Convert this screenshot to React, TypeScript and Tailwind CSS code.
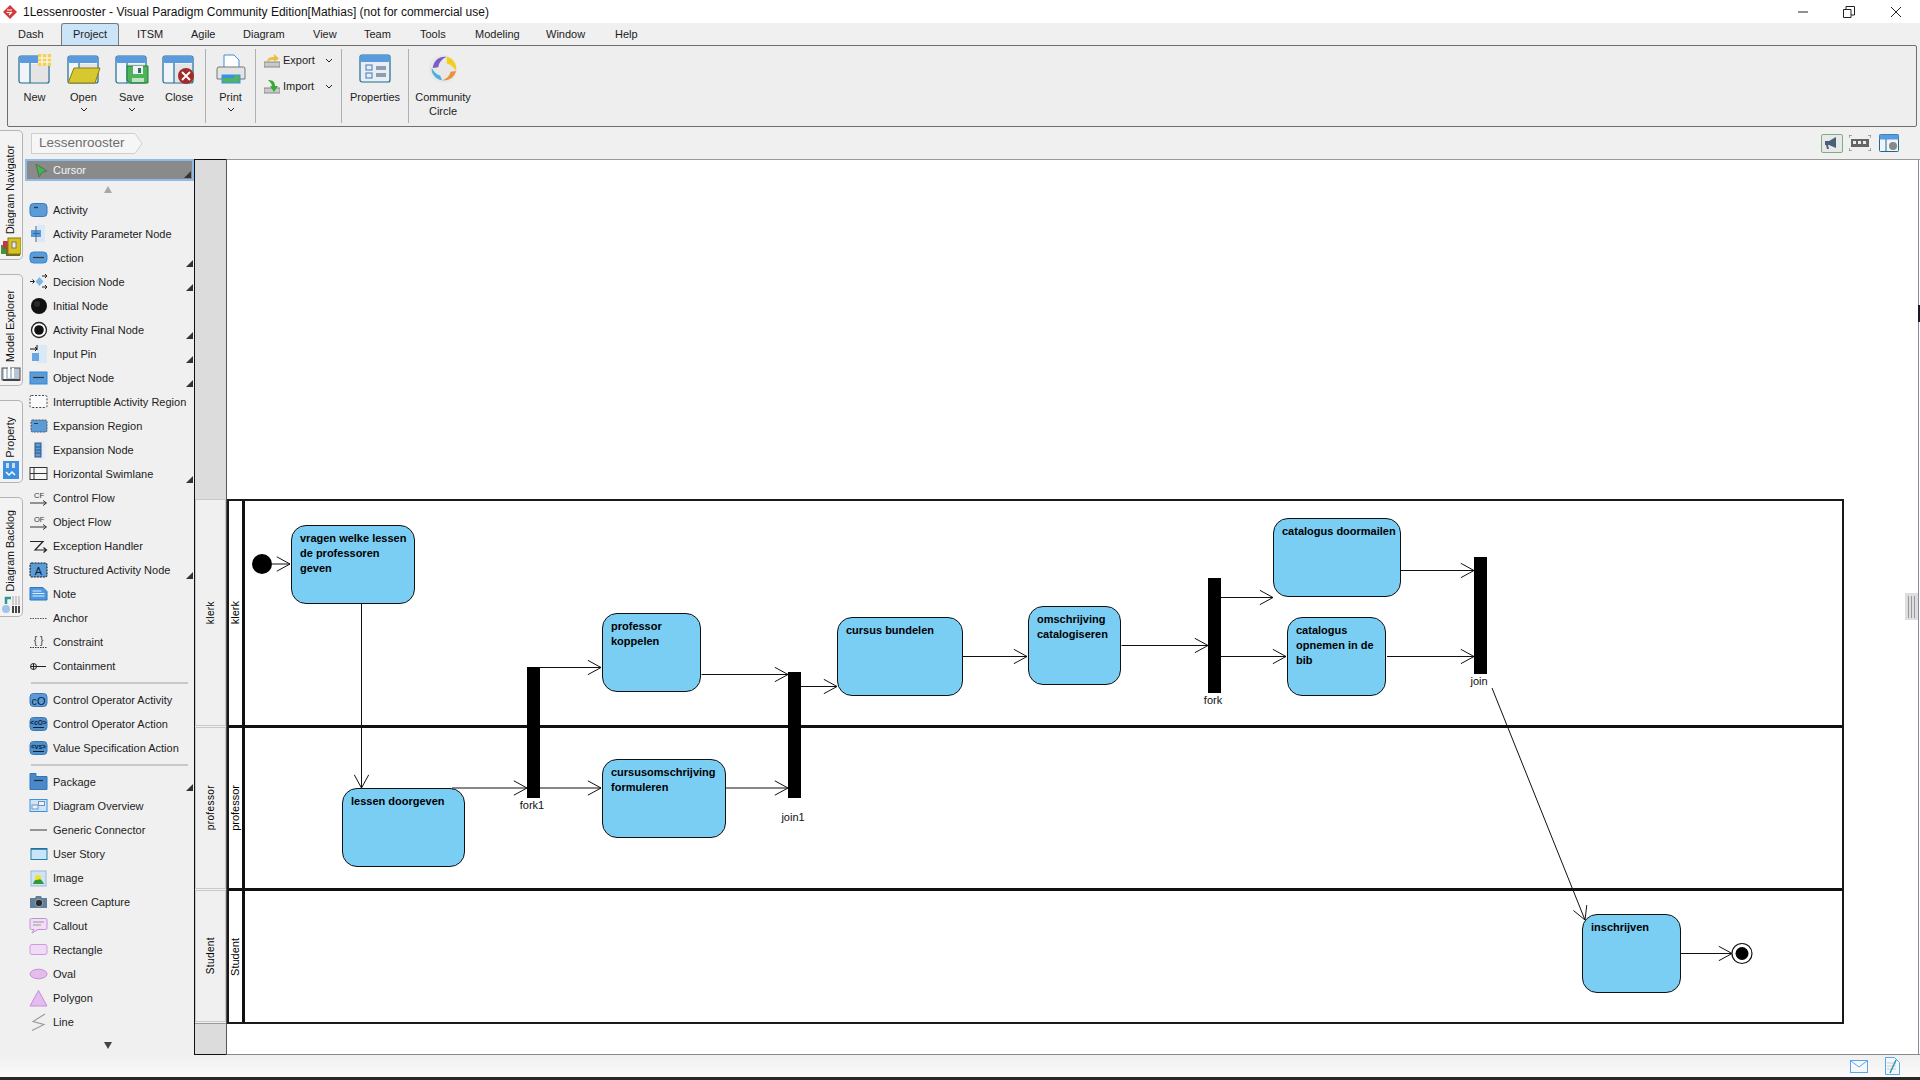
import React from "react";

const X0 = 227;
const Y0 = 159;

type IconProps = { name: string };

function PaletteIcon({ name }: IconProps) {
  const common = { width: 20, height: 20, viewBox: "0 0 20 20" };
  switch (name) {
    case "Activity":
      return (
        <svg {...common}>
          <rect x="1" y="3.500" width="17" height="13" rx="3.500" fill="#5a9bd8" stroke="#3a78b8" />
          <path d="M5 7.500h4" stroke="#1d3d5c" strokeWidth="1.400" />
        </svg>
      );
    case "Activity Parameter Node":
      return (
        <svg {...common}>
          <rect x="8" y="1" width="8" height="17" fill="#dbe9f7" />
          <rect x="2" y="6" width="10" height="7" fill="#5a9bd8" />
          <path d="M7 2v16M4 9.500h7" stroke="#3a6a98" />
        </svg>
      );
    case "Action":
      return (
        <svg {...common}>
          <rect x="1" y="4" width="17" height="11" rx="3.500" fill="#5a9bd8" stroke="#2f86dd" />
          <path d="M4 9.500h11" stroke="#333" strokeWidth="1.200" />
        </svg>
      );
    case "Decision Node":
      return (
        <svg {...common}>
          <path d="M10.500 5l4 4.500-4 4.500-4-4.500z" fill="#7db7ea" />
          <path d="M1 9.500h4M3.500 7.500l2 2-2 2M13 4h5M16 2l2 2-2 2M13 15h5M16 13l2 2-2 2" stroke="#222" fill="none" />
        </svg>
      );
    case "Initial Node":
      return (
        <svg {...common}>
          <circle cx="10" cy="10" r="8" fill="#111" />
          <circle cx="8" cy="8" r="3" fill="#444" opacity=".5" />
        </svg>
      );
    case "Activity Final Node":
      return (
        <svg {...common}>
          <circle cx="10" cy="10" r="7.500" fill="#fff" stroke="#222" strokeWidth="1.300" />
          <circle cx="10" cy="10" r="4.800" fill="#111" />
        </svg>
      );
    case "Input Pin":
      return (
        <svg {...common}>
          <rect x="8" y="1" width="10" height="18" fill="#dbe9f7" />
          <rect x="3" y="9" width="7" height="8" fill="#6aa7e2" />
          <path d="M1 5h7M6 3l2 2-2 2" stroke="#111" fill="none" />
          <path d="M8 1v5" stroke="#111" />
        </svg>
      );
    case "Object Node":
      return (
        <svg {...common}>
          <rect x="1" y="4" width="17" height="12" fill="#5a9bd8" stroke="#2f86dd" />
          <path d="M4 9.500h11" stroke="#333" strokeWidth="1.200" />
        </svg>
      );
    case "Interruptible Activity Region":
      return (
        <svg {...common}>
          <rect x="1" y="3.500" width="17" height="12" rx="1.500" fill="#fafafa" stroke="#444" strokeDasharray="2 1.500" />
        </svg>
      );
    case "Expansion Region":
      return (
        <svg {...common}>
          <rect x="2" y="4" width="16" height="12" rx="1.500" fill="#5a9bd8" stroke="#555" strokeDasharray="2 1" />
          <path d="M5 7.500h4" stroke="#1d3d5c" />
        </svg>
      );
    case "Expansion Node":
      return (
        <svg {...common}>
          <rect x="10" y="1" width="6" height="18" fill="#e3eefa" />
          <rect x="6" y="3" width="6" height="14" fill="#5a9bd8" stroke="#33577a" />
          <path d="M6 7h6M6 10h6M6 13h6" stroke="#33577a" />
        </svg>
      );
    case "Horizontal Swimlane":
      return (
        <svg {...common}>
          <rect x="1" y="3.500" width="17" height="12" fill="#f6f6f6" stroke="#333" />
          <path d="M5 3.500v12M1 9.500h17" stroke="#333" />
        </svg>
      );
    case "Control Flow":
    case "Object Flow":
      return (
        <svg {...common}>
          <path d="M1 15h16M14 12.500l3.500 2.500-3.500 2.500" stroke="#333" fill="none" />
          <text x="5" y="9.500" fontSize="7.500" fontFamily="Liberation Sans" fill="#333">
            {name === "Control Flow" ? "CF" : "OF"}
          </text>
        </svg>
      );
    case "Exception Handler":
      return (
        <svg {...common}>
          <path d="M1 5.500h13L6 14h11.500M14.500 11.500l3 2.500-3 2.500" stroke="#222" strokeWidth="1.200" fill="none" />
        </svg>
      );
    case "Structured Activity Node":
      return (
        <svg {...common}>
          <rect x="1" y="3" width="17" height="14" rx="1.500" fill="#5a9bd8" stroke="#111" strokeDasharray="2 1" />
          <text x="9.500" y="14.500" fontSize="11" fontFamily="Liberation Sans" fill="#123" textAnchor="middle">A</text>
        </svg>
      );
    case "Note":
      return (
        <svg {...common}>
          <path d="M1 3.500h13l4 4v8.500H1z" fill="#4f97de" stroke="#2f76c0" />
          <path d="M3.500 7h9M3.500 9.500h12M3.500 12h12" stroke="#dceeff" />
        </svg>
      );
    case "Anchor":
      return (
        <svg {...common}>
          <path d="M1 10.500h17" stroke="#555" strokeDasharray="1.500 1" />
        </svg>
      );
    case "Constraint":
      return (
        <svg {...common}>
          <path d="M1 15.500h17" stroke="#333" strokeDasharray="1.500 1" />
          <text x="9.500" y="11.500" fontSize="10" fontFamily="Liberation Sans" fill="#333" textAnchor="middle">{"{ }"}</text>
        </svg>
      );
    case "Containment":
      return (
        <svg {...common}>
          <circle cx="4.500" cy="10.500" r="3" fill="none" stroke="#222" />
          <path d="M1.500 10.500H17M4.500 7.500v6" stroke="#222" />
        </svg>
      );
    case "Control Operator Activity":
      return (
        <svg {...common}>
          <rect x="1" y="3.500" width="17" height="13" rx="3.500" fill="#5a9bd8" stroke="#3a78b8" />
          <text x="9.500" y="14.500" fontSize="11" fontFamily="Liberation Sans" fill="#123" textAnchor="middle">cO</text>
        </svg>
      );
    case "Control Operator Action":
    case "Value Specification Action":
      return (
        <svg {...common}>
          <rect x="1" y="3.500" width="17" height="13" rx="3.500" fill="#4f8fcb" stroke="#3a78b8" />
          <text x="9.500" y="11" fontSize="6.500" fontFamily="Liberation Sans" fontWeight="700" fill="#0c2236" textAnchor="middle">
            {name === "Control Operator Action" ? "<cO>" : "<vs>"}
          </text>
          <path d="M4 13.500h11" stroke="#0c2236" />
        </svg>
      );
    case "Package":
      return (
        <svg {...common}>
          <path d="M1 1.500h6v3h11v13H1z" fill="#4b88c7" stroke="#2f76c0" />
          <path d="M5 8.500h9" stroke="#1d2d3c" strokeWidth="1.200" />
        </svg>
      );
    case "Diagram Overview":
      return (
        <svg {...common}>
          <rect x="1" y="3.500" width="17" height="12" fill="#cfe4f8" stroke="#3d8fe0" />
          <rect x="3" y="9" width="6" height="4" fill="#eaf3fc" stroke="#6e96bb" />
          <rect x="9.500" y="5.500" width="6" height="4" fill="#eaf3fc" stroke="#6e96bb" />
        </svg>
      );
    case "Generic Connector":
      return (
        <svg {...common}>
          <path d="M1 10h17" stroke="#777" strokeWidth="1.500" />
        </svg>
      );
    case "User Story":
      return (
        <svg {...common}>
          <rect x="2" y="4.500" width="16" height="11" fill="#c8e6f8" stroke="#2a7fa8" />
          <path d="M2 5h16" stroke="#1d6f9c" strokeWidth="1.500" />
        </svg>
      );
    case "Image":
      return (
        <svg {...common}>
          <rect x="2" y="3" width="15" height="15" fill="#cfe3f4" stroke="#9bb9d4" />
          <circle cx="9" cy="10" r="3" fill="#f5e21a" />
          <path d="M4 16c1-4 3-5 5-4 2-2 4 0 6 4z" fill="#2e9a3a" />
        </svg>
      );
    case "Screen Capture":
      return (
        <svg {...common}>
          <path d="M1 6h5l1-2h5l1 2h5v10H1z" fill="#5f7f9c" />
          <circle cx="10" cy="11" r="3.800" fill="#2b2b2b" stroke="#9aa" />
        </svg>
      );
    case "Callout":
      return (
        <svg {...common}>
          <path d="M2.500 2.500h14a1.500 1.500 0 0 1 1.500 1.500v8a1.500 1.500 0 0 1-1.500 1.500H9L3 17l2-3.500H2.500A1.500 1.500 0 0 1 1 12V4a1.500 1.500 0 0 1 1.500-1.500z" fill="#f2dff5" stroke="#c58ed8" />
          <path d="M4 6h11M4 9h8" stroke="#999" />
        </svg>
      );
    case "Rectangle":
      return (
        <svg {...common}>
          <rect x="1" y="4.500" width="17" height="10" rx="2" fill="#f0daf5" stroke="#cf9be0" />
        </svg>
      );
    case "Oval":
      return (
        <svg {...common}>
          <ellipse cx="9.500" cy="10" rx="8.500" ry="4.800" fill="#e4bdec" stroke="#c58ed8" />
        </svg>
      );
    case "Polygon":
      return (
        <svg {...common}>
          <path d="M9.500 2.500L18 18H1z" fill="#e3bdf0" stroke="#c58ed8" />
        </svg>
      );
    case "Line":
      return (
        <svg {...common}>
          <path d="M16 2L4 9.500l11 3L3 18.500" stroke="#999" strokeWidth="1.100" fill="none" />
        </svg>
      );
    default:
      return null;
  }
}

const group1: [string, boolean][] = [
  ["Activity", false],
  ["Activity Parameter Node", false],
  ["Action", true],
  ["Decision Node", true],
  ["Initial Node", false],
  ["Activity Final Node", true],
  ["Input Pin", true],
  ["Object Node", true],
  ["Interruptible Activity Region", false],
  ["Expansion Region", false],
  ["Expansion Node", false],
  ["Horizontal Swimlane", true],
  ["Control Flow", false],
  ["Object Flow", false],
  ["Exception Handler", false],
  ["Structured Activity Node", true],
  ["Note", false],
  ["Anchor", false],
  ["Constraint", false],
  ["Containment", false],
];
const group2: [string, boolean][] = [
  ["Control Operator Activity", false],
  ["Control Operator Action", false],
  ["Value Specification Action", false],
];
const group3: [string, boolean][] = [
  ["Package", true],
  ["Diagram Overview", false],
  ["Generic Connector", false],
  ["User Story", false],
  ["Image", false],
  ["Screen Capture", false],
  ["Callout", false],
  ["Rectangle", false],
  ["Oval", false],
  ["Polygon", false],
  ["Line", false],
];

function Corner() {
  return (
    <span className="absolute right-[1px] bottom-[1px] w-0 h-0 border-l-[7px] border-l-transparent border-b-[7px] border-b-[#333]" />
  );
}

function PaletteRow({ name, more }: { name: string; more: boolean }) {
  return (
    <div className="relative h-[24px] flex items-center pl-[4px] text-[11px] text-[#1c1c1c] whitespace-nowrap">
      <span className="w-[24px] h-[20px] shrink-0 flex items-center">
        <PaletteIcon name={name} />
      </span>
      <span>{name}</span>
      {more && <span className="absolute right-[1px] top-[14px] w-0 h-0 border-l-[7px] border-l-transparent border-b-[7px] border-b-[#333]" />}
    </div>
  );
}

function Divider() {
  return <div className="h-[2px] mx-[6px] bg-[#c8c8c8]" />;
}

function Palette() {
  return (
    <div className="w-[169px] shrink-0 flex flex-col bg-[#f0f0f0]">
      <div className="relative h-[22px] border-2 border-[#8fbce6] bg-[#8a8a8a] flex items-center pl-[7px] text-[11px] text-[#f4f4f4]">
        <svg width="14" height="15" viewBox="0 0 14 15" className="mr-[5px]">
          <path d="M2 1l11 7-5 1.500L5 14z" fill="#3fb54a" stroke="#55705a" />
        </svg>
        Cursor
        <Corner />
      </div>
      <div className="h-[17px] flex items-center justify-center">
        <span className="w-0 h-0 ml-[-4px] border-l-[4px] border-r-[4px] border-b-[7px] border-l-transparent border-r-transparent border-b-[#a8a8a8]" />
      </div>
      {group1.map(([n, m]) => (
        <PaletteRow key={n} name={n} more={m} />
      ))}
      <div className="h-[10px] flex flex-col justify-center"><Divider /></div>
      {group2.map(([n, m]) => (
        <PaletteRow key={n} name={n} more={m} />
      ))}
      <div className="h-[10px] flex flex-col justify-center"><Divider /></div>
      {group3.map(([n, m]) => (
        <PaletteRow key={n} name={n} more={m} />
      ))}
      <div className="flex justify-center pt-[8px]">
        <span className="w-0 h-0 ml-[-4px] border-l-[4px] border-r-[4px] border-t-[7px] border-l-transparent border-r-transparent border-t-[#444]" />
      </div>
    </div>
  );
}

function RailIcon({ kind }: { kind: string }) {
  if (kind === "nav")
    return (
      <svg width="20" height="20" viewBox="0 0 20 20">
        <rect x="0" y="8" width="5" height="9" fill="#3a9a3a" />
        <rect x="2" y="4" width="5" height="8" fill="#c8324a" />
        <rect x="5" y="9" width="14" height="10" fill="#6a6a30" />
        <rect x="7" y="1" width="13" height="16" fill="#d9c21e" stroke="#8a7a12" />
        <rect x="11" y="5" width="4" height="6" fill="#eee" stroke="#777" />
      </svg>
    );
  if (kind === "model")
    return (
      <svg width="20" height="18" viewBox="0 0 20 18">
        <rect x="1" y="3" width="18" height="12" fill="#b8c6d4" stroke="#555" />
        <path d="M4 4v10M8 2v11M12 3v10" stroke="#fff" strokeWidth="2" />
        <path d="M2 15h17" stroke="#444" strokeWidth="2" />
      </svg>
    );
  if (kind === "prop")
    return (
      <svg width="18" height="20" viewBox="0 0 18 20">
        <rect x="1" y="1" width="16" height="18" fill="#3d8fe0" />
        <rect x="4" y="3" width="3" height="5" fill="#cde" />
        <rect x="10" y="3" width="3" height="5" fill="#cde" />
        <path d="M4 12l3 3 3-3 3 3" stroke="#fff" strokeWidth="1.500" fill="none" />
      </svg>
    );
  return (
    <svg width="20" height="20" viewBox="0 0 20 20">
      <path d="M5 10V4h5" stroke="#2a9a90" strokeWidth="2.500" fill="none" />
      <circle cx="5" cy="15" r="4" fill="#9fc4e8" />
      <path d="M11 12h2v7h-2zM14 12h2v7h-2zM17 12h2v7h-2z" fill="#444" />
      <path d="M11 2h2v9h-2zM14 2h2v9h-2zM17 2h2v9h-2z" fill="#ccc" />
    </svg>
  );
}

function RailTab({ label, h, kind, mt }: { label: string; h: string; kind: string; mt: string }) {
  return (
    <div className={`${h} ${mt} w-[23px] shrink-0 flex flex-col items-center justify-end pb-[2px] bg-[#f3f3f3] border border-l-0 border-[#b4b4b4] rounded-r-[5px]`}>
      <span className="[writing-mode:vertical-rl] rotate-180 text-[10.700px] leading-[14px] text-[#111] whitespace-nowrap mb-[3px] mr-[3px]">
        {label}
      </span>
      <RailIcon kind={kind} />
    </div>
  );
}

function LaneHeader({ label, h }: { label: string; h: string }) {
  return (
    <div className={`${h} bg-[#f0f0f0] border border-[#c8c8c8] mb-[1px] flex items-center justify-center`}>
      <span className="[writing-mode:vertical-rl] rotate-180 text-[10px] tracking-[0.400px] text-black">{label}</span>
    </div>
  );
}

type NodeT = { x: number; y: number; w: number; h: number; lines: string[] };
const nodes: NodeT[] = [
  { x: 291, y: 525, w: 124, h: 79, lines: ["vragen welke lessen", "de professoren", "geven"] },
  { x: 342, y: 788, w: 123, h: 79, lines: ["lessen doorgeven"] },
  { x: 602, y: 613, w: 99, h: 79, lines: ["professor", "koppelen"] },
  { x: 602, y: 759, w: 124, h: 79, lines: ["cursusomschrijving", "formuleren"] },
  { x: 837, y: 617, w: 126, h: 79, lines: ["cursus bundelen"] },
  { x: 1028, y: 606, w: 93, h: 79, lines: ["omschrijving", "catalogiseren"] },
  { x: 1273, y: 518, w: 128, h: 79, lines: ["catalogus doormailen"] },
  { x: 1287, y: 617, w: 99, h: 79, lines: ["catalogus", "opnemen in de", "bib"] },
  { x: 1582, y: 914, w: 99, h: 79, lines: ["inschrijven"] },
];

const bars = [
  { x: 527, y: 667, w: 13, h: 131, label: "fork1", lx: 532, ly: 805 },
  { x: 788, y: 672, w: 13, h: 126, label: "join1", lx: 793, ly: 817 },
  { x: 1208, y: 578, w: 13, h: 115, label: "fork", lx: 1213, ly: 700 },
  { x: 1474, y: 557, w: 13, h: 117, label: "join", lx: 1479, ly: 681 },
];

const edges: [number, number, number, number][] = [
  [272, 564, 290, 564],
  [361.500, 604, 361.500, 788],
  [452, 788, 527, 788],
  [540, 667.500, 601, 667.500],
  [701.500, 674.500, 788, 674.500],
  [540, 788, 601, 788],
  [726, 788, 788, 788],
  [801, 686.500, 837, 686.500],
  [963, 656.500, 1027, 656.500],
  [1121.500, 645.500, 1208, 645.500],
  [1221, 597.500, 1273, 597.500],
  [1221, 656.500, 1286, 656.500],
  [1401, 570.500, 1474, 570.500],
  [1387, 656.500, 1474, 656.500],
  [1492, 688, 1585, 920],
  [1681, 953.500, 1732, 953.500],
];

function arrowHead(x1: number, y1: number, x2: number, y2: number) {
  const a = Math.atan2(y2 - y1, x2 - x1);
  const len = 15;
  const sp = 0.5;
  const p = (t: number) => `${x2 - len * Math.cos(a + t)},${y2 - len * Math.sin(a + t)}`;
  return `${p(sp)} ${x2},${y2} ${p(-sp)}`;
}

function Diagram() {
  return (
    <>
      <div className="absolute left-0 top-[340px] w-[1617px] h-[525px] border-2 border-[#1a1a1a] flex flex-col">
        {[
          { label: "klerk", cls: "h-[224px]" },
          { label: "professor", cls: "h-[163px] border-t-[3px] border-[#111]" },
          { label: "Student", cls: "flex-1 border-t-[3px] border-[#111]" },
        ].map((l) => (
          <div key={l.label} className={`${l.cls} flex`}>
            <div className="w-[13px] h-full border-r-[3px] border-[#111] flex items-center justify-center shrink-0 box-content">
              <span className="[writing-mode:vertical-rl] rotate-180 text-[11px] text-black">{l.label}</span>
            </div>
          </div>
        ))}
      </div>
      <svg className="absolute left-0 top-0 pointer-events-none" width="1693" height="895" viewBox={`${X0} ${Y0} 1693 895`}>
        {edges.map(([x1, y1, x2, y2], i) => (
          <g key={i} stroke="#111" fill="none" strokeWidth="1">
            <line x1={x1} y1={y1} x2={x2} y2={y2} />
            <polyline points={arrowHead(x1, y1, x2, y2)} />
          </g>
        ))}
        <ellipse cx="262" cy="564" rx="10" ry="10" fill="#000" />
        <circle cx="1742" cy="953.500" r="10" fill="#fff" stroke="#111" strokeWidth="1.200" />
        <circle cx="1742" cy="953.500" r="6.500" fill="#000" />
      </svg>
      {nodes.map((n) => (
        <div
          key={n.lines[0]}
          className="absolute rounded-[15px] border border-[#111] bg-[#7acef4] pl-[8px] pt-[5px] text-[11px] leading-[15px] font-bold text-black whitespace-nowrap"
          style={{ left: n.x - X0, top: n.y - Y0, width: n.w, height: n.h }}
        >
          {n.lines.map((t) => (
            <div key={t}>{t}</div>
          ))}
        </div>
      ))}
      {bars.map((b) => (
        <React.Fragment key={b.label}>
          <div className="absolute bg-black" style={{ left: b.x - X0, top: b.y - Y0, width: b.w, height: b.h }} />
          <div
            className="absolute -translate-x-1/2 -translate-y-1/2 text-[11px] leading-[12px] text-[#111]"
            style={{ left: b.lx - X0, top: b.ly - Y0 }}
          >
            {b.label}
          </div>
        </React.Fragment>
      ))}
    </>
  );
}

function RibbonIcon({ kind }: { kind: string }) {
  const frame = (
    <>
      <rect x="1" y="2" width="30" height="27" rx="2" fill="#f0f4f8" stroke="#1e6a8e" strokeWidth="1.200" />
      <rect x="1" y="2" width="30" height="7" rx="2" fill="#5a9be0" />
      <path d="M12 9v20" stroke="#1e6a8e" strokeWidth="1.200" />
      <rect x="13" y="10" width="17" height="18" fill="#e4e4e4" />
    </>
  );
  if (kind === "new")
    return (
      <svg width="34" height="32" viewBox="0 0 34 32">
        {frame}
        <rect x="20" y="0" width="13" height="12" fill="#f0d060" />
        <path d="M24 0v12M29 0v12M20 4h13M20 8h13" stroke="#fff" />
      </svg>
    );
  if (kind === "open")
    return (
      <svg width="34" height="32" viewBox="0 0 34 32">
        {frame}
        <path d="M7 14h26l-5 15H1z" fill="#d8c830" stroke="#8a7a12" />
      </svg>
    );
  if (kind === "save")
    return (
      <svg width="34" height="32" viewBox="0 0 34 32">
        {frame}
        <path d="M12 12h21v17H15l-3-3z" fill="#4fb35a" stroke="#1f7f3a" />
        <rect x="18" y="12" width="10" height="8" fill="#eef" />
        <rect x="23" y="14" width="3" height="5" fill="#2a7a3a" />
        <rect x="17" y="24" width="12" height="4" fill="#bfe2c5" />
      </svg>
    );
  if (kind === "close")
    return (
      <svg width="34" height="32" viewBox="0 0 34 32">
        {frame}
        <circle cx="24" cy="22" r="8" fill="#a02c2c" />
        <path d="M20 18l8 8M28 18l-8 8" stroke="#fff" strokeWidth="1.800" />
      </svg>
    );
  if (kind === "print")
    return (
      <svg width="30" height="32" viewBox="0 0 30 32">
        <path d="M8 1h10l5 5v9H8z" fill="#fff" stroke="#3d8fe0" />
        <path d="M2 13h26a2 2 0 0 1 1 2v10H1V15z" fill="#e4e4e4" stroke="#777" />
        <rect x="6" y="21" width="18" height="8" fill="#4fb36a" stroke="#3d8fe0" />
        <rect x="6" y="21" width="12" height="3" fill="#3d8fe0" />
      </svg>
    );
  if (kind === "props")
    return (
      <svg width="32" height="30" viewBox="0 0 32 30">
        <rect x="1" y="1" width="30" height="27" rx="2" fill="#e8eef4" stroke="#1e6a8e" strokeWidth="1.200" />
        <rect x="1" y="1" width="30" height="7" rx="2" fill="#5a9be0" />
        <rect x="7" y="11" width="6" height="5" fill="none" stroke="#3d7ab8" />
        <rect x="7" y="19" width="6" height="5" fill="none" stroke="#3d7ab8" />
        <rect x="17" y="12" width="10" height="4" fill="#8e9eae" />
        <rect x="17" y="19" width="10" height="4" fill="#8e9eae" />
      </svg>
    );
  return (
    <svg width="30" height="30" viewBox="0 0 32 32">
      <circle cx="16" cy="16" r="15" fill="#e8e8e8" />
      <path d="M5 15C6 7 12 2 20 3c-4 2-8 5-9 11z" fill="#7c5cc4" />
      <path d="M20 3c7 2 11 8 10 15-2-3-5-7-10-8z" fill="#f2cf1e" />
      <path d="M30 18c-2 7-8 11-15 10 4-1 8-4 9-9z" fill="#e8923c" />
      <path d="M15 28C8 27 3 21 4 15c2 4 5 7 9 8z" fill="#4cb0e0" />
    </svg>
  );
}

function RibbonBtn({ label, kind, w, chevron }: { label: React.ReactNode; kind: string; w: string; chevron?: boolean }) {
  return (
    <div className={`${w} flex flex-col items-center text-[11px] leading-[14px] text-[#1c1c1c]`}>
      <div className="h-[36px] pt-[8px] flex items-start justify-center">
        <RibbonIcon kind={kind} />
      </div>
      <div className="mt-[8px] text-center">{label}</div>
      {chevron && (
        <svg width="8" height="5" viewBox="0 0 8 5" className="mt-[3px]">
          <path d="M1 1l3 3 3-3" stroke="#222" fill="none" />
        </svg>
      )}
    </div>
  );
}

const Sep = () => <div className="w-[1px] h-[74px] my-[3px] bg-[#b0b0b0]" />;

export default function App() {
  return (
    <div className="relative w-[1920px] h-[1080px] overflow-hidden flex flex-col bg-[#f0f0f0] [font-family:'Liberation_Sans',sans-serif]">
      {/* Title bar */}
      <div className="h-[23px] shrink-0 bg-white flex items-center relative">
        <svg width="16" height="16" viewBox="0 0 16 16" className="ml-[2px] mr-[5px]">
          <path d="M8 1l7 7-7 7-7-7z" fill="#d23a3a" />
          <path d="M5 6h5M4.500 8.500h5M7 11l3-3" stroke="#fff" strokeWidth="1.200" fill="none" />
        </svg>
        <span className="text-[12px] text-[#111]">1Lessenrooster - Visual Paradigm Community Edition[Mathias] (not for commercial use)</span>
        <div className="ml-auto flex items-center">
          <svg width="12" height="12" viewBox="0 0 12 12" className="mr-[34px]"><path d="M1 6h10" stroke="#222" /></svg>
          <svg width="12" height="12" viewBox="0 0 12 12" className="mr-[35px]">
            <path d="M.5 3.500h7.500v8H.5zM3 3.500V.500h8.500V9H8" stroke="#222" fill="none" />
          </svg>
          <svg width="12" height="12" viewBox="0 0 12 12" className="mr-[18px]"><path d="M1 1l10 10M11 1L1 11" stroke="#222" /></svg>
        </div>
      </div>
      {/* Tabs */}
      <div className="h-[22px] shrink-0 flex items-end text-[11px] text-[#1c1c1c]">
        <div className="ml-[18px] w-[43px] h-[21px] flex items-center">Dash</div>
        <div className="w-[58px] h-[22px] flex items-center justify-center bg-[#cce4f7] border border-b-0 border-[#7a7a7a] rounded-t-[3px]">Project</div>
        <div className="ml-[18px] w-[54px] h-[21px] flex items-center">ITSM</div>
        <div className="w-[52px] h-[21px] flex items-center">Agile</div>
        <div className="w-[70px] h-[21px] flex items-center">Diagram</div>
        <div className="w-[51px] h-[21px] flex items-center">View</div>
        <div className="w-[56px] h-[21px] flex items-center">Team</div>
        <div className="w-[55px] h-[21px] flex items-center">Tools</div>
        <div className="w-[71px] h-[21px] flex items-center">Modeling</div>
        <div className="w-[69px] h-[21px] flex items-center">Window</div>
        <div className="h-[21px] flex items-center">Help</div>
      </div>
      {/* Ribbon */}
      <div className="ml-[7px] mr-[3px] h-[82px] shrink-0 border border-[#6e6e6e] rounded-[2px] bg-[#eeeeee] flex pl-[4px]">
        <RibbonBtn label="New" kind="new" w="w-[45px]" />
        <div className="w-[2px]" />
        <RibbonBtn label="Open" kind="open" w="w-[49px]" chevron />
        <RibbonBtn label="Save" kind="save" w="w-[47px]" chevron />
        <RibbonBtn label="Close" kind="close" w="w-[48px]" />
        <div className="w-[2px]" />
        <Sep />
        <RibbonBtn label="Print" kind="print" w="w-[49px]" chevron />
        <Sep />
        <div className="w-[85px] text-[11px] text-[#1c1c1c] pl-[8px] pt-[1px]">
          <div className="h-[26px] flex items-center">
            <svg width="16" height="16" viewBox="0 0 16 16"><rect x="0" y="10" width="16" height="5" fill="#c8c8c8" stroke="#888" /><path d="M3 10c0-4 3-5 7-5V2l5 4.500L10 10V8c-3 0-5 0-7 2z" fill="#e8c040" /></svg>
            <span className="ml-[3px] w-[42px]">Export</span>
            <svg width="8" height="5" viewBox="0 0 8 5"><path d="M1 1l3 3 3-3" stroke="#222" fill="none" /></svg>
          </div>
          <div className="h-[26px] flex items-center">
            <svg width="16" height="16" viewBox="0 0 16 16"><rect x="0" y="10" width="16" height="5" fill="#c8c8c8" stroke="#888" /><path d="M4 2c5 0 7 2 7 6h3l-4 6-4-6h2c0-2-2-4-4-6z" fill="#3aa83a" /></svg>
            <span className="ml-[3px] w-[42px]">Import</span>
            <svg width="8" height="5" viewBox="0 0 8 5"><path d="M1 1l3 3 3-3" stroke="#222" fill="none" /></svg>
          </div>
        </div>
        <Sep />
        <RibbonBtn label="Properties" kind="props" w="w-[66px]" />
        <Sep />
        <RibbonBtn label={<>Community<br />Circle</>} kind="circle" w="w-[68px]" />
      </div>
      {/* Main */}
      <div className="flex-1 min-h-0 flex">
        <div className="w-[25px] shrink-0 flex flex-col pt-[3px]">
          <RailTab label="Diagram Navigator" h="h-[130px]" kind="nav" mt="" />
          <RailTab label="Model Explorer" h="h-[112px]" kind="model" mt="mt-[14px]" />
          <RailTab label="Property" h="h-[83px]" kind="prop" mt="mt-[14px]" />
          <RailTab label="Diagram Backlog" h="h-[120px]" kind="back" mt="mt-[14px]" />
        </div>
        <div className="flex-1 min-w-0 flex flex-col">
          <div className="h-[32px] shrink-0 flex items-center pl-[6px] pr-[8px]">
            <div className="h-[21px] flex items-center">
              <div className="h-[21px] pl-[7px] pr-[9px] flex items-center border border-r-0 border-[#cfcfcf] bg-[#f6f6f6] text-[13.500px] text-[#6e6e6e]">Lessenrooster</div>
              <svg width="9" height="21" viewBox="0 0 9 21"><path d="M0 .500h1l7 10-7 10H0" fill="#f6f6f6" stroke="#cfcfcf" /></svg>
            </div>
            <div className="ml-auto flex items-center mr-[13px]">
              <div className="w-[22px] h-[19px] border border-[#7fae7f] rounded-[2px] bg-[#e8e8e8] flex items-center justify-center">
                <svg width="16" height="14" viewBox="0 0 16 14"><path d="M1 5h4l7-4v11L5 9H4l1 4H3L2 9H1z" fill="#4a6078" /></svg>
              </div>
              <svg width="22" height="16" viewBox="0 0 22 16" className="ml-[6px]">
                <rect x="2" y="4" width="18" height="8" fill="#666" />
                <rect x="4" y="6" width="3" height="3" fill="#eee" /><rect x="9" y="6" width="3" height="3" fill="#eee" /><rect x="14" y="6" width="3" height="3" fill="#eee" />
                <path d="M0 3V0h3M19 0h3v3M0 13v3h3M19 16h3v-3" stroke="#666" fill="none" />
              </svg>
              <svg width="20" height="18" viewBox="0 0 20 18" className="ml-[8px]">
                <rect x=".5" y=".5" width="19" height="17" rx="1" fill="#f0f4f8" stroke="#1e6a8e" />
                <rect x=".5" y=".5" width="19" height="5" fill="#5a9be0" />
                <path d="M7 5v12" stroke="#1e6a8e" />
                <circle cx="14" cy="12" r="4" fill="#888" />
              </svg>
            </div>
          </div>
          <div className="flex-1 min-h-0 flex">
            <Palette />
            <div className="w-[33px] shrink-0 flex flex-col border-l border-[#111] border-r border-r-[#555]">
              <div className="h-[340px] bg-[#dcdcdc] border-t border-[#111]" />
              <LaneHeader label="klerk" h="h-[227px]" />
              <LaneHeader label="professor" h="h-[162px]" />
              <LaneHeader label="Student" h="h-[132px]" />
              <div className="flex-1 bg-[#dcdcdc] border-t border-[#999] border-b border-b-[#111]" />
            </div>
            <div className="relative flex-1 min-w-0 bg-white border-t border-[#999] border-b border-b-[#8a8a8a]">
              <div className="absolute left-0 top-[-1px] w-full h-full">
                <Diagram />
              </div>
              <div className="absolute right-[1px] top-0 bottom-0 w-[1px] bg-[#8a8a9a]" />
              <div className="absolute right-0 top-[145px] w-[2px] h-[17px] bg-[#1a1a2a]" />
              <div className="absolute right-[2px] top-[433px] w-[13px] h-[27px] bg-[#dedede] flex items-center justify-center gap-[2px]">
                <span className="w-[1px] h-[22px] bg-[#999]" />
                <span className="w-[1px] h-[22px] bg-[#999]" />
                <span className="w-[1px] h-[22px] bg-[#999]" />
              </div>
            </div>
          </div>
        </div>
      </div>
      {/* Status */}
      <div className="h-[22px] shrink-0 bg-gradient-to-b from-[#f0f0f0] to-[#fbfbfb] flex items-center justify-end pr-[20px] gap-[17px]">
        <svg width="18" height="13" viewBox="0 0 18 13"><rect x=".5" y=".5" width="17" height="12" fill="#f4f8fc" stroke="#5ca5e8" /><path d="M1 1l8 6 8-6" stroke="#5ca5e8" fill="none" /></svg>
        <svg width="15" height="18" viewBox="0 0 15 18"><path d="M.5.500h9l5 5v12H.500z" fill="#f4f8fc" stroke="#5ca5e8" /><path d="M2 6h9M2 9h9M2 12h9" stroke="#ccc" /><path d="M11 3L5 16" stroke="#2a9ab0" strokeWidth="1.500" /></svg>
      </div>
      <div className="h-[3px] shrink-0 bg-[#2a2a2a]" />
    </div>
  );
}
